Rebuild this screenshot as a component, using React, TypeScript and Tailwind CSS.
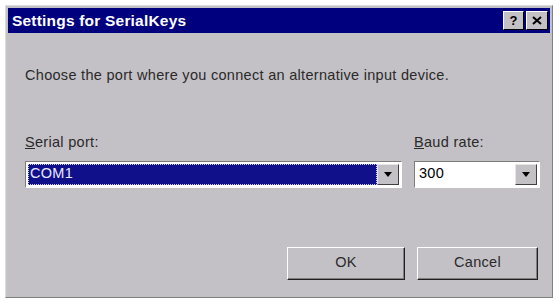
export default function App() {
  return (
    <div className="h-[301px] w-[559px] bg-white p-[5px] font-['Liberation_Sans',Arial,sans-serif]">
      <div className="flex h-[293px] w-[548px] flex-col border border-t-[#dcdcdc] border-l-[#dcdcdc] border-r-[#808080] border-b-[#808080] bg-[#c4c1c6] p-[2px]">
        {/* title bar */}
        <div className="flex h-[25px] items-center justify-between bg-[#00007f] pl-[4px] pr-[2px]">
          <span className="text-[15.5px] font-bold tracking-[0.2px] text-white">Settings for SerialKeys</span>
          <div className="flex gap-[2px]">
            <button className="flex h-[19px] w-[21px] items-center justify-center border border-t-white border-l-white border-r-black border-b-black bg-[#c4c1c6] text-[13px] font-bold leading-none text-black">
              ?
            </button>
            <button className="flex h-[19px] w-[22px] items-center justify-center border border-t-white border-l-white border-r-black border-b-black bg-[#c4c1c6]">
              <svg width="10" height="9" viewBox="0 0 10 9">
                <path d="M1 1 L9 8 M9 1 L1 8" stroke="black" strokeWidth="2" />
              </svg>
            </button>
          </div>
        </div>

        {/* body */}
        <div className="flex flex-1 flex-col pl-[17px] pr-[12px] pt-[32px] text-[14.5px] tracking-[0.3px] text-[#2a2a2a]">
          <p>Choose the port where you connect an alternative input device.</p>

          <div className="mt-[45px] flex gap-[12px]">
            <div className="flex flex-col">
              <span><span className="underline">S</span>erial port:</span>
              <div className="mt-[7px] flex h-[27px] w-[377px] border border-t-[#7c7c7c] border-l-[#7c7c7c] border-r-white border-b-white bg-white p-[2px]">
                <div className="flex flex-1 items-center bg-[#10108a] pl-[2px] text-[#e8e8ff] outline-1 outline-dotted outline-[#d0d0ff] -outline-offset-1">
                  COM1
                </div>
                <div className="flex w-[22px] items-center justify-center border border-t-[#e6e6e6] border-l-[#e6e6e6] border-r-[#404040] border-b-[#404040] bg-[#c4c1c6]">
                  <svg width="8" height="5" viewBox="0 0 8 5">
                    <path d="M0 0 H8 L4 5 Z" fill="black" />
                  </svg>
                </div>
              </div>
            </div>
            <div className="flex flex-col">
              <span><span className="underline">B</span>aud rate:</span>
              <div className="mt-[7px] flex h-[27px] w-[126px] border border-t-[#7c7c7c] border-l-[#7c7c7c] border-r-white border-b-white bg-white p-[2px]">
                <div className="flex flex-1 items-center pl-[2px] text-black">300</div>
                <div className="flex w-[22px] items-center justify-center border border-t-[#e6e6e6] border-l-[#e6e6e6] border-r-[#404040] border-b-[#404040] bg-[#c4c1c6]">
                  <svg width="8" height="5" viewBox="0 0 8 5">
                    <path d="M0 0 H8 L4 5 Z" fill="black" />
                  </svg>
                </div>
              </div>
            </div>
          </div>

          <div className="mt-[59px] flex justify-end gap-[12px]">
            <button className="h-[33px] w-[118px] border border-t-white border-l-white border-r-[#202020] border-b-[#202020] bg-[#c4c1c6] text-[14.5px] tracking-[0.3px] text-[#2a2a2a] shadow-[inset_-1px_-1px_0_#808080]">
              OK
            </button>
            <button className="h-[33px] w-[121px] border border-t-white border-l-white border-r-[#202020] border-b-[#202020] bg-[#c4c1c6] text-[14.5px] tracking-[0.3px] text-[#2a2a2a] shadow-[inset_-1px_-1px_0_#808080]">
              Cancel
            </button>
          </div>
        </div>
      </div>
    </div>
  );
}
